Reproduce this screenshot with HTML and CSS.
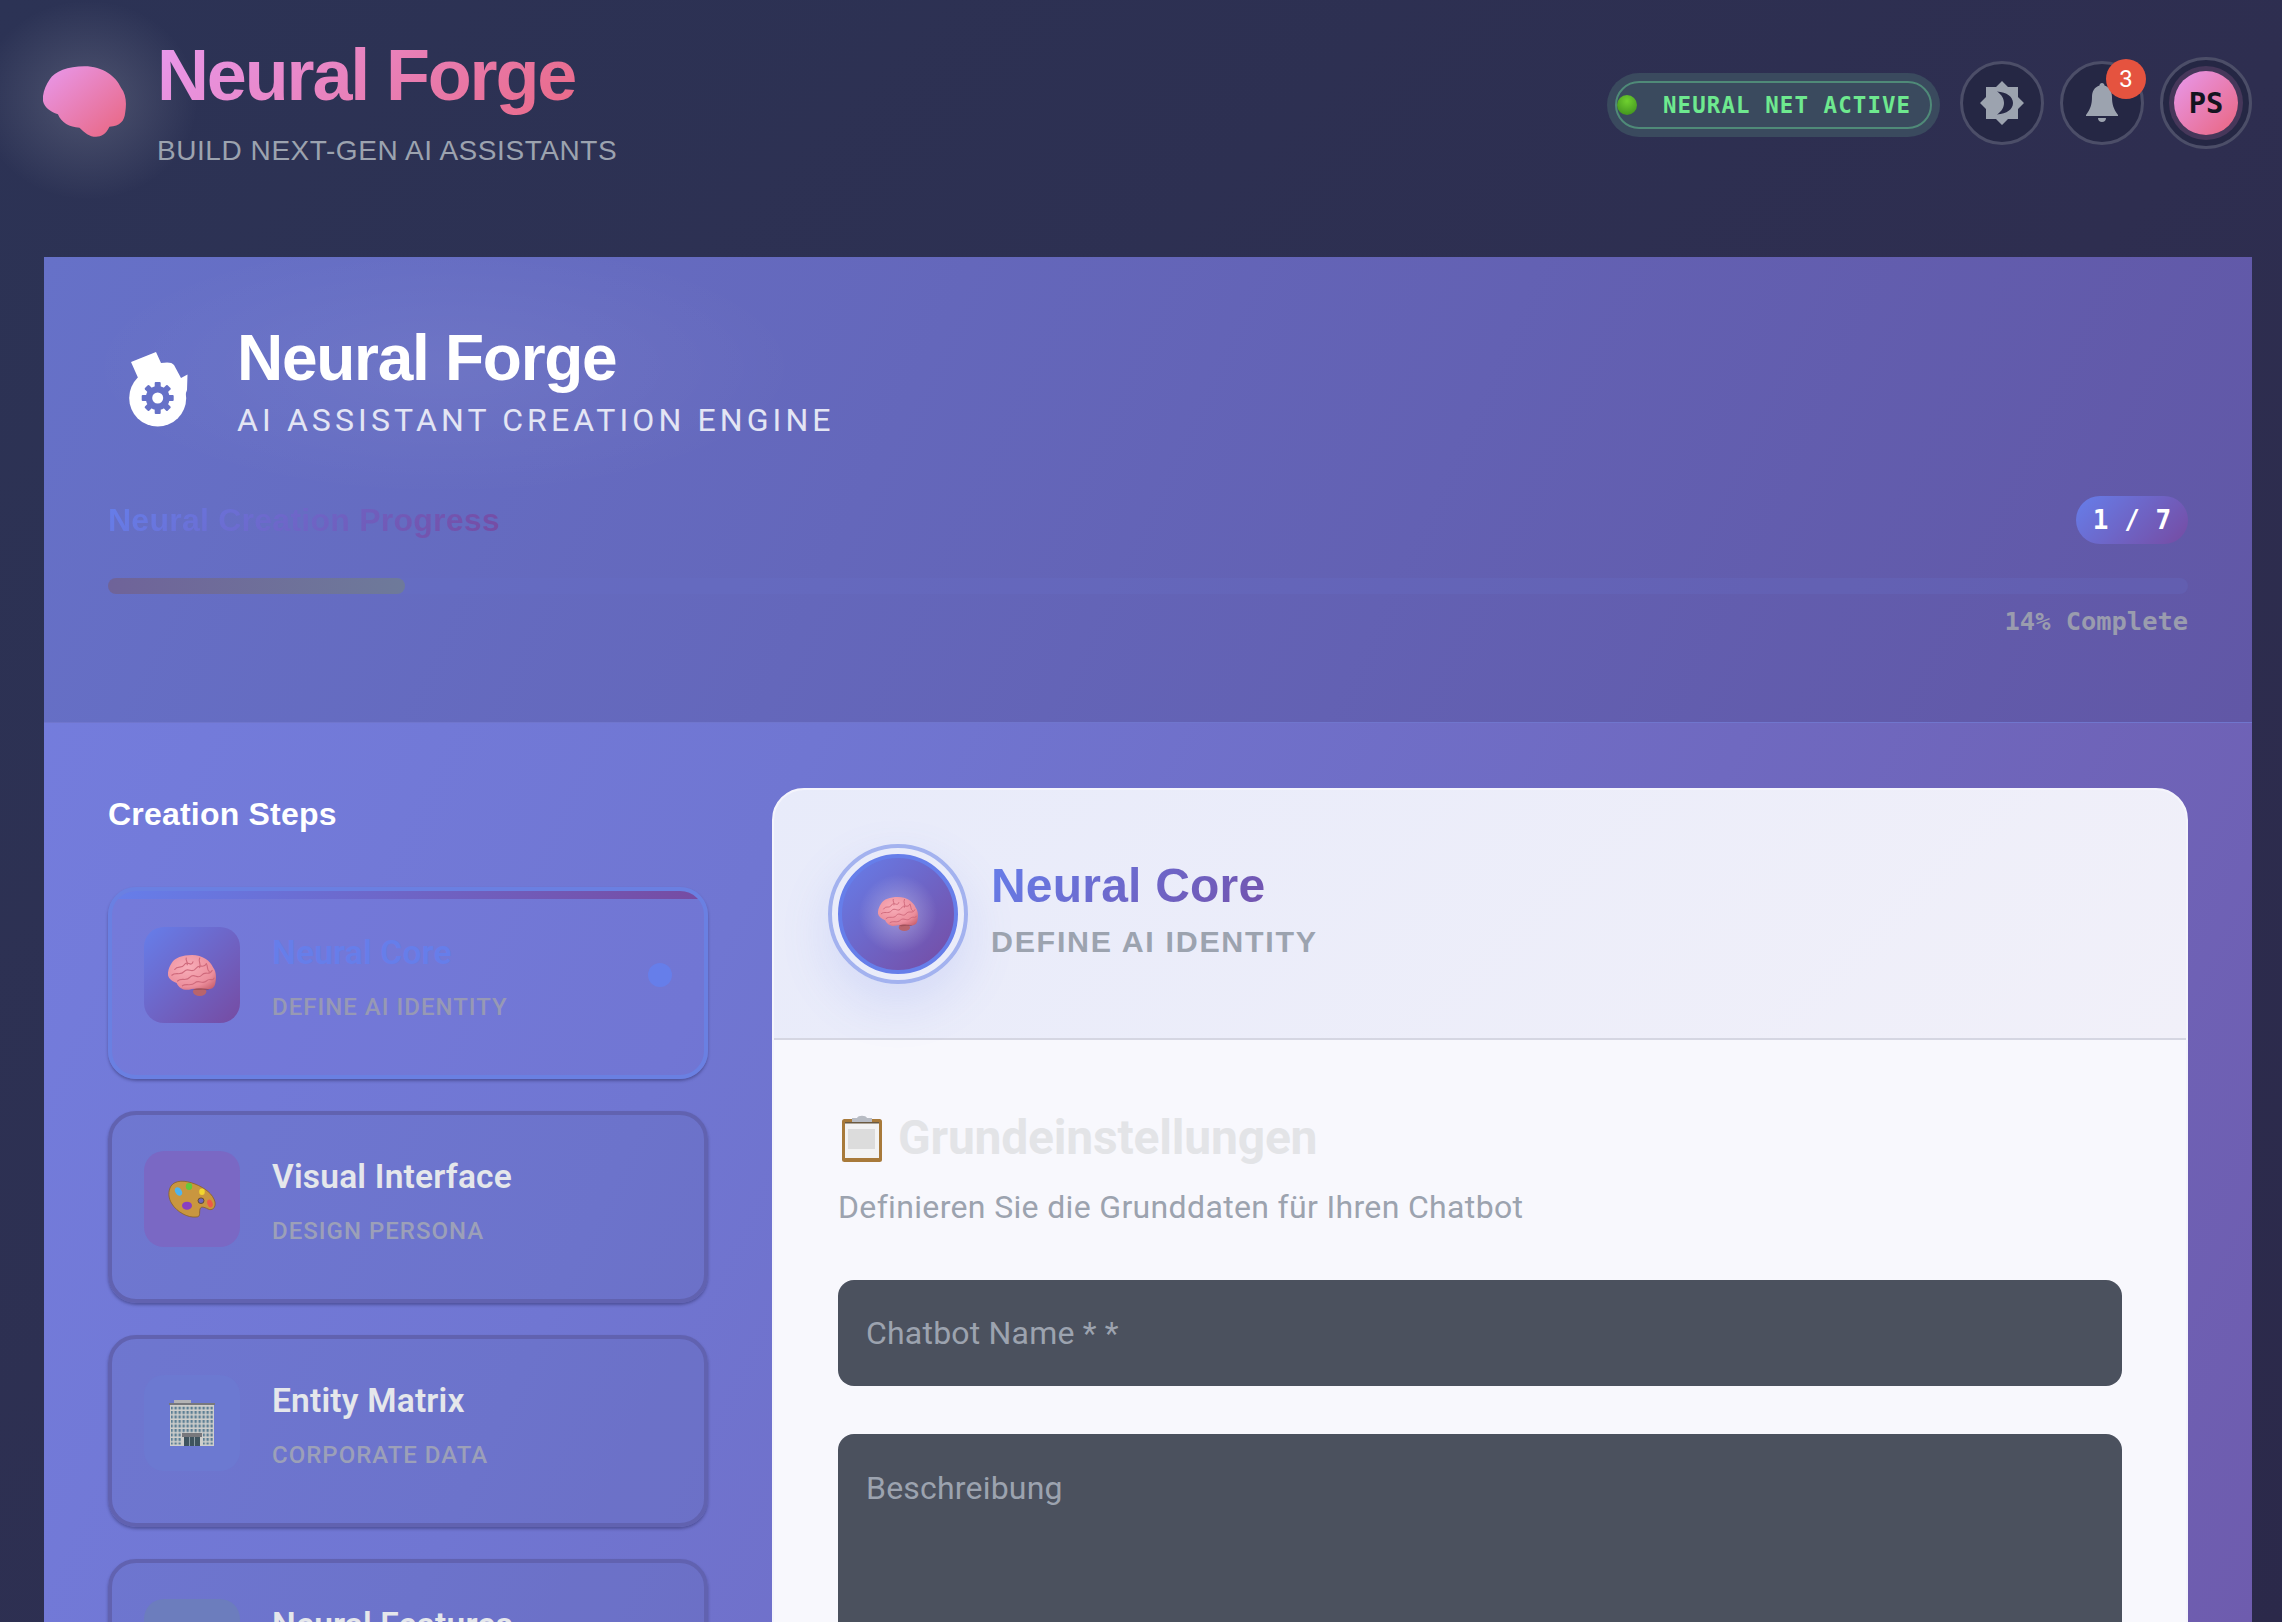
FILE: index.html
```html
<!DOCTYPE html>
<html lang="de">
<head>
<meta charset="utf-8">
<title>Neural Forge</title>
<link rel="stylesheet" href="styles.css">
</head>
<body>
<svg class="svg-defs" aria-hidden="true">
  <defs>
    <linearGradient id="brandGrad" x1="0" y1="0" x2="1" y2="1">
      <stop offset="0" stop-color="#e899ee"/><stop offset="1" stop-color="#e9657e"/>
    </linearGradient>
    <radialGradient id="brainGrad" cx=".4" cy=".35" r=".8">
      <stop offset="0" stop-color="#f8aeb9"/><stop offset=".7" stop-color="#ec8e9c"/><stop offset="1" stop-color="#c9606e"/>
    </radialGradient>
    <symbol id="brain" viewBox="0 0 100 85">
      <ellipse cx="66" cy="76" rx="14" ry="9" fill="#b9646c"/>
      <path fill="url(#brainGrad)" d="M8 16C14 6 30 0 50 0C72 0 88 12 94 26C100 34 101 44 99 56C98 66 93 72 80 71C72 70 62 68 44 72C32 74 22 68 18 58C6 54-2 46 0 36C1 28 4 22 8 16Z"/>
      <g fill="none" stroke="#cf6a7c" stroke-width="2.400" stroke-linecap="round">
        <path d="M14 30C20 20 28 30 34 20S48 26 52 14"/>
        <path d="M8 42C16 34 26 44 34 34S50 40 58 28S74 30 80 18"/>
        <path d="M20 54C28 46 38 56 46 46S62 52 70 42S86 44 92 32"/>
        <path d="M30 64C38 58 48 66 56 58S72 62 80 54S92 56 96 48"/>
        <path d="M66 6C62 14 70 18 66 26"/>
        <path d="M38 6C36 12 42 14 40 20"/>
        <path d="M80 18C84 24 80 30 86 34"/>
      </g>
      <path fill="#8d3f4a" opacity=".55" d="M52 72C60 68 74 68 86 71C82 74 78 72 72 72C66 72 58 74 52 72Z"/>
    </symbol>
  </defs>
</svg>

<header class="topbar">
  <div class="brand">
    <span class="brand-glow"></span>
    <svg class="brand-logo" viewBox="0 0 100 85"><path fill="url(#brandGrad)" d="M8 16C14 6 30 0 50 0C72 0 88 12 94 26C100 34 101 44 99 56C98 66 93 72 80 73C76 82 70 85 64 85C56 85 50 80 44 74C32 74 22 68 18 58C6 54-2 46 0 36C1 28 4 22 8 16Z"/></svg>
    <div class="brand-text">
      <h1 class="brand-title">Neural Forge</h1>
      <p class="brand-sub">BUILD NEXT-GEN AI ASSISTANTS</p>
    </div>
  </div>
  <div class="top-actions">
    <div class="status"><span class="status-dot"></span><span class="status-text">NEURAL NET ACTIVE</span></div>
    <button class="round-btn" aria-label="Theme">
      <svg class="icon-theme" viewBox="0 0 44 44"><path fill="#9ca3af" fill-rule="evenodd" d="M22 0L28 6H38V16L44 22L38 28V38H28L22 44L16 38H6V28L0 22L6 16V6H16ZM17 10.500C27 11 33 16 33 22S27 33 17 33.500C22 30 24 26 24 22S22 14 17 10.500Z"/></svg>
    </button>
    <button class="round-btn" aria-label="Notifications">
      <svg class="icon-bell" viewBox="0 0 32 40"><path fill="#9ca3af" d="M16 0C17.400 0 18.500 1 18.500 2.500C23.500 4 26 8.500 26 14C26 21 27.500 26 32 32V33H0V32C4.500 26 6 21 6 14C6 8.500 8.500 4 13.500 2.500C13.500 1 14.600 0 16 0ZM12 35H20C20 37.500 18.300 39 16 39S12 37.500 12 35Z"/></svg>
      <span class="badge">3</span>
    </button>
    <div class="avatar-ring"><div class="avatar">PS</div></div>
  </div>
</header>

<main class="shell">
  <section class="hero">
    <div class="hero-head">
      <svg class="hero-icon" viewBox="0 0 100 100">
        <path fill="#fff" d="M21 22L46 12L51 23C57 22 62 22 64 25L71 38L77.500 34.500L77 50L70 70L30 70L29 40Z"/>
        <circle cx="47.700" cy="58" r="28.500" fill="#fff"/>
        <g transform="translate(47.700 58)" fill="#6671c8">
          <circle r="12"/>
          <rect x="-3" y="-16" width="6" height="32" rx="1"/>
          <rect x="-3" y="-16" width="6" height="32" rx="1" transform="rotate(45)"/>
          <rect x="-3" y="-16" width="6" height="32" rx="1" transform="rotate(90)"/>
          <rect x="-3" y="-16" width="6" height="32" rx="1" transform="rotate(135)"/>
        </g>
        <circle cx="47.700" cy="58" r="5.500" fill="#fff"/>
      </svg>
      <div>
        <h2 class="hero-title">Neural Forge</h2>
        <p class="hero-sub">AI ASSISTANT CREATION ENGINE</p>
      </div>
    </div>
    <div class="progress-head">
      <h3 class="progress-title">Neural Creation Progress</h3>
      <span class="progress-count">1 / 7</span>
    </div>
    <div class="progress-track"><div class="progress-fill"></div></div>
    <div class="progress-note">14% Complete</div>
  </section>

  <section class="workspace">
    <aside class="steps">
      <h3 class="steps-title">Creation Steps</h3>
      <ul class="step-list">
        <li class="step step-active">
          <span class="step-icon icon-active"><svg class="emoji-brain"><use href="#brain"/></svg></span>
          <div class="step-text"><div class="step-name">Neural Core</div><div class="step-desc">DEFINE AI IDENTITY</div></div>
          <span class="step-dot"></span>
        </li>
        <li class="step">
          <span class="step-icon icon-purple">
            <svg class="emoji-palette" viewBox="0 0 48 38">
              <path fill="#c9963f" stroke="#8a6223" stroke-width=".8" d="M3 6C7 0 17 0 27 4C37 8 45 14 47 22C48 28 44 31 40 29C36 27 33 26 32 29C31 33 33 37 28 37C20 38 9 32 4 24C0 18 0 11 3 6Z"/>
              <ellipse cx="10.500" cy="11.500" rx="3.200" ry="4.500" fill="#4fb4ee" transform="rotate(-30 10.500 11.500)"/>
              <ellipse cx="21" cy="6.500" rx="3.200" ry="3.400" fill="#62c93a"/>
              <ellipse cx="34" cy="11.700" rx="2.800" ry="3.200" fill="#f2d62e"/>
              <ellipse cx="19" cy="25.700" rx="5" ry="4" fill="#8a3fc0"/>
              <ellipse cx="42" cy="23.500" rx="2.600" ry="4" fill="#ee5a48" transform="rotate(-20 42 23.500)"/>
              <ellipse cx="33" cy="20.700" rx="3" ry="2.800" fill="#6f64bb" stroke="#5c4218" stroke-width=".8"/>
            </svg>
          </span>
          <div class="step-text"><div class="step-name">Visual Interface</div><div class="step-desc">DESIGN PERSONA</div></div>
        </li>
        <li class="step">
          <span class="step-icon icon-blue">
            <svg class="emoji-building" viewBox="0 0 46 46">
              <defs><pattern id="win" width="4" height="4.500" patternUnits="userSpaceOnUse" x="1.500" y="6.500"><rect width="2.400" height="3" fill="#5d7f94"/></pattern></defs>
              <rect x="5" y="0" width="17" height="4" fill="#b3b3b5"/>
              <rect x="0" y="3" width="46" height="2" fill="#77787c"/>
              <rect x="1" y="5" width="44" height="41" fill="#cfcfcc"/>
              <rect x="2" y="6.500" width="42" height="38" fill="url(#win)"/>
              <rect x="12" y="33" width="22" height="13" fill="#cfcfcc"/>
              <rect x="13" y="33" width="20" height="4" fill="#77787c"/>
              <rect x="15" y="37" width="16" height="9" fill="#3f545f"/>
              <path stroke="#9fb0b8" stroke-width=".8" d="M20.500 37V46M25.500 37V46"/>
            </svg>
          </span>
          <div class="step-text"><div class="step-name">Entity Matrix</div><div class="step-desc">CORPORATE DATA</div></div>
        </li>
        <li class="step">
          <span class="step-icon icon-teal"></span>
          <div class="step-text"><div class="step-name">Neural Features</div></div>
        </li>
      </ul>
    </aside>

    <div class="panel">
      <div class="panel-head">
        <div class="core-ring"><div class="core"><svg class="emoji-core"><use href="#brain"/></svg></div></div>
        <div>
          <h2 class="panel-title">Neural Core</h2>
          <p class="panel-sub">DEFINE AI IDENTITY</p>
        </div>
      </div>
      <div class="panel-body">
        <h3 class="section-title">
          <svg class="emoji-clip" viewBox="0 0 40 47">
            <rect x="0" y="4" width="40" height="43" rx="2.500" fill="#a87a3a"/>
            <rect x="3" y="8" width="34" height="35" fill="#f3f3f3"/>
            <rect x="3" y="7" width="34" height="1.500" fill="#6b5a40"/>
            <rect x="6" y="14" width="27" height="20" fill="#dcdcdc"/>
            <path fill="#b8bcc4" d="M10 3H15C16 0 24 0 25 3H30V7H10Z"/>
          </svg>
          <span>Grundeinstellungen</span>
        </h3>
        <p class="section-desc">Definieren Sie die Grunddaten für Ihren Chatbot</p>
        <input class="field" type="text" placeholder="Chatbot Name * *">
        <textarea class="field field-area" placeholder="Beschreibung"></textarea>
      </div>
    </div>
  </section>
</main>
</body>
</html>
```
FILE: styles.css
```css
* { box-sizing: border-box; }
html, body { height: 100%; }
body {
  margin: 0;
  height: 1622px;
  overflow: hidden;
  padding: 0 30px 0 44px;
  background: linear-gradient(135deg, #2c3355 0%, #2e2e50 60%, #2b294a 100%);
  font-family: "Liberation Sans", Arial, sans-serif;
  color: #fff;
}
h1, h2, h3, p, ul { margin: 0; padding: 0; }
ul { list-style: none; }
.svg-defs { position: absolute; width: 0; height: 0; }

.topbar {
  height: 257px;
  display: flex;
  justify-content: space-between;
  align-items: flex-start;
}
.brand { display: flex; position: relative; align-items: flex-start; }
.brand-glow {
  position: absolute;
  left: -66px; top: 0;
  width: 220px; height: 200px;
  background: radial-gradient(closest-side, rgba(255,255,255,.16), rgba(255,255,255,0));
}
.brand-logo {
  position: relative;
  flex: none;
  width: 83px; height: 71px;
  margin: 66px 31px 0 -1px;
}
.brand-text { position: relative; }
.brand-title {
  margin-top: 33px;
  font-size: 72px;
  line-height: 84px;
  font-weight: 700;
  letter-spacing: -0.03em;
  background: linear-gradient(135deg, #e899ee, #e9657e);
  -webkit-background-clip: text;
  background-clip: text;
  color: transparent;
}
.brand-sub {
  margin-top: 18px;
  font-size: 28px;
  line-height: 32px;
  letter-spacing: 0.02em;
  color: #9ca3af;
}

.top-actions { display: flex; align-items: center; gap: 16px; margin-top: 57px; }
.status {
  display: flex;
  align-items: center;
  width: 317px;
  height: 48px;
  margin: 4px 12px 0 0;
  border: 2px solid #4f8a78;
  border-radius: 24px;
  background: #3a4a5e;
  box-shadow: 0 0 0 8px #3a4a5e;
}
.status-dot {
  width: 20px; height: 20px;
  border-radius: 50%;
  background: radial-gradient(circle at 50% 30%, #6fd02f, #3a8a1c);
}
.status-text {
  margin-left: 26px;
  font-family: "DejaVu Sans Mono", monospace;
  font-weight: 700;
  font-size: 22.400px;
  letter-spacing: 0.05em;
  color: #6ee98f;
}
.round-btn {
  position: relative;
  width: 84px; height: 84px;
  padding: 0;
  border: 3px solid #4c4e68;
  border-radius: 50%;
  background: #252744;
  display: flex; align-items: center; justify-content: center;
}
.icon-theme { width: 44px; height: 44px; }
.icon-bell { width: 32px; height: 40px; }
.badge {
  position: absolute;
  top: -5px; right: -5px;
  width: 40px; height: 40px;
  border-radius: 50%;
  background: #e5533f;
  color: #fff;
  font-family: "Roboto", sans-serif;
  font-size: 24px;
  line-height: 40px;
  text-align: center;
}
.avatar-ring {
  width: 92px; height: 92px;
  border: 3px solid #4c4e68;
  border-radius: 50%;
  background: #252744;
  display: flex; align-items: center; justify-content: center;
}
.avatar {
  width: 64px; height: 64px;
  border-radius: 50%;
  background: linear-gradient(135deg, #e899ee, #e9657e);
  box-shadow: 0 0 0 5px #46375a;
  color: #14141f;
  font-family: "DejaVu Sans Mono", monospace;
  font-weight: 700;
  font-size: 28.800px;
  line-height: 64px;
  text-align: center;
}

.shell {
  height: 1365px;
  overflow: hidden;
  background: linear-gradient(115deg, #757edf 0%, #7076d2 35%, #6e5cae 100%);
}
.hero {
  height: 466px;
  padding: 64px 64px 0;
  background:
    radial-gradient(360px 130px at 400px 110px, rgba(255,255,255,.06), rgba(255,255,255,0)),
    linear-gradient(115deg, #6671c8 0%, #6157a6 100%);
  border-bottom: 1px solid #7076cd;
}
.hero-head { display: flex; align-items: flex-start; height: 175px; }
.hero-icon { width: 100px; height: 100px; margin: 19px 27px 0 2px; flex: none; }
.hero-title {
  font-size: 64px;
  line-height: 74px;
  letter-spacing: -0.02em;
  font-weight: 700;
}
.hero-sub {
  margin-top: 6px;
  font-family: "Roboto", sans-serif;
  font-size: 32px;
  line-height: 38px;
  letter-spacing: 4.120px;
  color: #e3e5f4;
}
.progress-head { display: flex; justify-content: space-between; align-items: center; height: 48px; }
.progress-title {
  font-size: 32px;
  font-weight: 700;
  letter-spacing: .25px;
  background: linear-gradient(135deg, #667eea, #764ba2);
  -webkit-background-clip: text;
  background-clip: text;
  color: transparent;
}
.progress-count {
  width: 112px; height: 48px;
  border-radius: 24px;
  background: linear-gradient(135deg, #667eea, #764ba2);
  font-family: "DejaVu Sans Mono", monospace;
  font-weight: 700;
  font-size: 26px;
  line-height: 48px;
  text-align: center;
}
.progress-track {
  height: 16px;
  margin-top: 34px;
  border-radius: 8px;
  background: rgba(102,110,200,.25);
}
.progress-fill {
  width: 297px; height: 16px;
  border-radius: 8px;
  background: linear-gradient(90deg, #6f6399, #6e7a9a);
}
.progress-note {
  margin-top: 12px;
  text-align: right;
  font-family: "DejaVu Sans Mono", monospace;
  font-weight: 700;
  font-size: 25.400px;
  line-height: 30px;
  color: #9a9cae;
}

.workspace {
  display: grid;
  grid-template-columns: 600px 1416px;
  column-gap: 64px;
  padding: 65px 64px 0;
}
.steps-title { font-size: 32px; line-height: 37px; font-weight: 700; letter-spacing: .2px; margin-top: 8px; margin-bottom: 54px; }
.step-list { display: flex; flex-direction: column; gap: 32px; }
.step {
  position: relative;
  height: 192px;
  display: flex;
  align-items: flex-start;
  gap: 32px;
  padding: 36px 32px;
  border: 4px solid #6162b0;
  border-radius: 28px;
  background: rgba(80,95,160,.12);
  box-shadow: 0 2px 3px rgba(40,40,90,.45);
}
.step-active {
  border-color: #6a80e2;
  background: rgba(120,120,220,.2);
  overflow: hidden;
}
.step-active::before {
  content: "";
  position: absolute;
  left: 0; right: 0; top: 0;
  height: 8px;
  background: linear-gradient(90deg, #667eea, #764ba2);
}
.step-icon {
  width: 96px; height: 96px;
  flex: none;
  border-radius: 20px;
  display: flex; align-items: center; justify-content: center;
}
.icon-active { background: linear-gradient(135deg, #667eea, #764ba2); }
.icon-purple { background: #7a68c4; }
.icon-blue { background: #6c79d1; }
.icon-teal { background: #6c7dbd; }
.emoji-brain { width: 48px; height: 41px; }
.emoji-palette { width: 48px; height: 38px; }
.emoji-building { width: 46px; height: 46px; }
.step-text { flex: 1; }
.step-name {
  font-family: "Roboto", sans-serif;
  font-weight: 600;
  font-size: 33.500px;
  line-height: 38px;
  letter-spacing: .2px;
  color: #e5e7eb;
  margin-top: 7px;
}
.step-active .step-name { color: #667eea; }
.step-desc {
  font-family: "Roboto", sans-serif;
  font-weight: 500;
  font-size: 24px;
  line-height: 28px;
  letter-spacing: 1px;
  color: #9ca0b8;
  margin-top: 21px;
}
.step-active .step-desc { color: #9799b4; }
.step-dot {
  position: absolute;
  right: 32px; top: 72px;
  width: 24px; height: 24px;
  border-radius: 50%;
  background: #667eea;
}

.panel {
  height: 1100px;
  border: 2px solid #f4f4fc;
  border-radius: 32px;
  background: #f8f8fd;
  overflow: hidden;
}
.panel-head {
  height: 250px;
  display: flex;
  align-items: center;
  gap: 23px;
  padding: 0 54px;
  background: linear-gradient(135deg, #e8ebfa, #f1f0f9);
  border-bottom: 2px solid #d5d6e2;
}
.core-ring {
  width: 140px; height: 140px;
  flex: none;
  border: 4px solid #a3b2ef;
  border-radius: 50%;
  display: flex; align-items: center; justify-content: center;
  box-shadow: 0 20px 50px rgba(102,126,234,.16);
}
.core {
  width: 120px; height: 120px;
  border: 4px solid #667eea;
  border-radius: 50%;
  display: flex; align-items: center; justify-content: center;
  background:
    radial-gradient(closest-side, rgba(255,255,255,.35), rgba(255,255,255,0) 70%),
    linear-gradient(135deg, #667eea, #764ba2);
}
.emoji-core { width: 40px; height: 34px; }
.panel-title {
  font-size: 48px;
  line-height: 56px;
  font-weight: 700;
  letter-spacing: .2px;
  background: linear-gradient(135deg, #667eea, #764ba2);
  -webkit-background-clip: text;
  background-clip: text;
  color: transparent;
  width: 330px;
  margin-top: -12px;
}
.panel-sub {
  margin-top: 10px;
  font-size: 30.400px;
  line-height: 34px;
  font-weight: 700;
  letter-spacing: 1.7px;
  color: #9ca3af;
}
.panel-body { padding: 70px 64px 0; }
.section-title {
  display: flex;
  align-items: center;
  gap: 16px;
  font-family: "Roboto", sans-serif;
  font-weight: 700;
  font-size: 48px;
  line-height: 56px;
  letter-spacing: -.2px;
  color: #e3e4e7;
}
.emoji-clip { width: 40px; height: 47px; margin-left: 4px; flex: none; }
.section-desc {
  margin-top: 22px;
  font-family: "Roboto", sans-serif;
  font-size: 32px;
  line-height: 38px;
  letter-spacing: .34px;
  color: #9ca3af;
}
.field {
  display: block;
  width: 100%;
  height: 106px;
  margin-top: 54px;
  padding: 0 28px;
  border: 0;
  border-radius: 16px;
  background: #4b515e;
  color: #fff;
  font-family: "Roboto", sans-serif;
  font-size: 32px;
  letter-spacing: .2px;
  outline: none;
  resize: none;
}
.field::placeholder { color: #9ca3af; opacity: 1; }
.field-area { height: 300px; margin-top: 48px; padding-top: 35px; }
```
